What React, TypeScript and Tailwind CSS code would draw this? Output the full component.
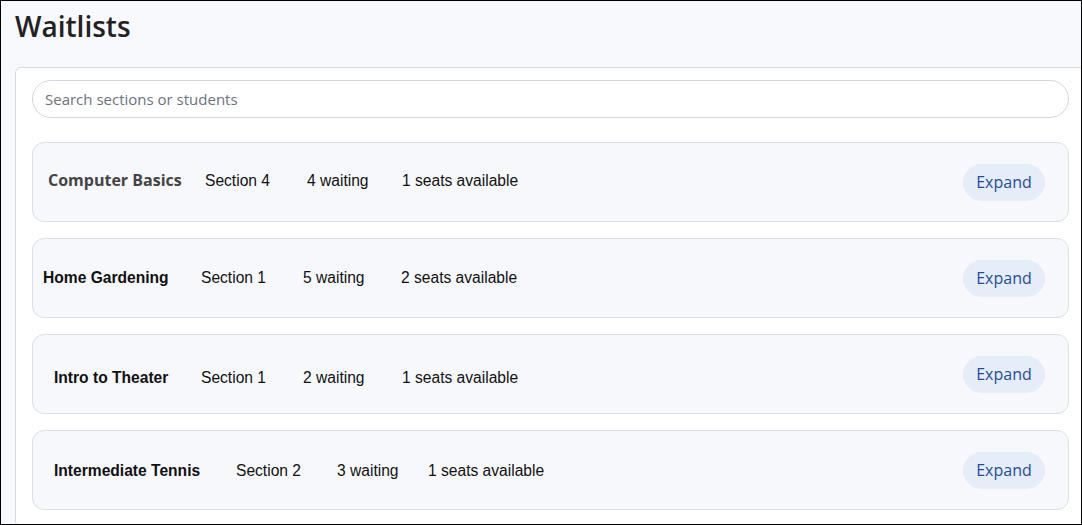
import React from "react";

type Row = {
  name: string;
  section: string;
  waiting: string;
  seats: string;
  openSans?: boolean;
  rowPad: string;
  nameW: string;
  secW: string;
  waitW: string;
};

const rows: Row[] = [
  { name: "Computer Basics", section: "Section 4", waiting: "4 waiting", seats: "1 seats available", openSans: true, rowPad: "pl-[15px] pt-[27px]", nameW: "w-[157px]", secW: "w-[102px]", waitW: "w-[95px]" },
  { name: "Home Gardening", section: "Section 1", waiting: "5 waiting", seats: "2 seats available", rowPad: "pl-[10px] pt-[29px]", nameW: "w-[158px]", secW: "w-[102px]", waitW: "w-[98px]" },
  { name: "Intro to Theater", section: "Section 1", waiting: "2 waiting", seats: "1 seats available", rowPad: "pl-[21px] pt-[33px]", nameW: "w-[147px]", secW: "w-[102px]", waitW: "w-[99px]" },
  { name: "Intermediate Tennis", section: "Section 2", waiting: "3 waiting", seats: "1 seats available", rowPad: "pl-[21px] pt-[30px]", nameW: "w-[182px]", secW: "w-[101px]", waitW: "w-[91px]" },
];

const arial = "text-[15.6px] text-[#111111] font-['Liberation_Sans',Arial,sans-serif]";

export default function App() {
  return (
    <div className="w-[1082px] h-[525px] border border-black overflow-hidden bg-[#f8f9fd]">
      <div className="pl-[14px] pt-[6px]">
        <h1 className="text-[28px] leading-[38px] font-semibold text-[#222222] font-['Open_Sans',sans-serif]">
          Waitlists
        </h1>
        <div className="mt-[22px] w-[1071px] bg-white border border-[#d5d8de] rounded-[6px] px-[16px] pt-[12px] pb-[16px]">
          <div className="h-[38px] rounded-full border border-[#d2d5dc] bg-white flex items-center pl-[12px]">
            <span className="text-[15px] text-[#6b7280] font-['Open_Sans',sans-serif]">
              Search sections or students
            </span>
          </div>
          <div className="mt-[24px] flex flex-col gap-[16px]">
            {rows.map((r) => (
              <div
                key={r.name}
                className="h-[80px] rounded-[12px] border border-[#dcdfe7] bg-[#f7f8fc] flex justify-between"
              >
                <div className={`flex items-baseline leading-[20px] ${r.rowPad}`}>
                  <span
                    className={
                      r.openSans
                        ? `${r.nameW} text-[16px] font-bold text-[#444444] font-['Open_Sans',sans-serif]`
                        : `${r.nameW} text-[15.6px] font-bold text-[#111111] font-['Liberation_Sans',Arial,sans-serif]`
                    }
                  >
                    {r.name}
                  </span>
                  <span className={`${r.secW} ${arial}`}>{r.section}</span>
                  <span className={`${r.waitW} ${arial}`}>{r.waiting}</span>
                  <span className={arial}>{r.seats}</span>
                </div>
                <div className="flex items-center pr-[23px]">
                  <button className="h-[37px] w-[82px] rounded-full bg-[#e5edf9] text-[#1c4b9e] text-[16px] font-['Open_Sans',sans-serif]">
                    Expand
                  </button>
                </div>
              </div>
            ))}
          </div>
        </div>
      </div>
    </div>
  );
}
